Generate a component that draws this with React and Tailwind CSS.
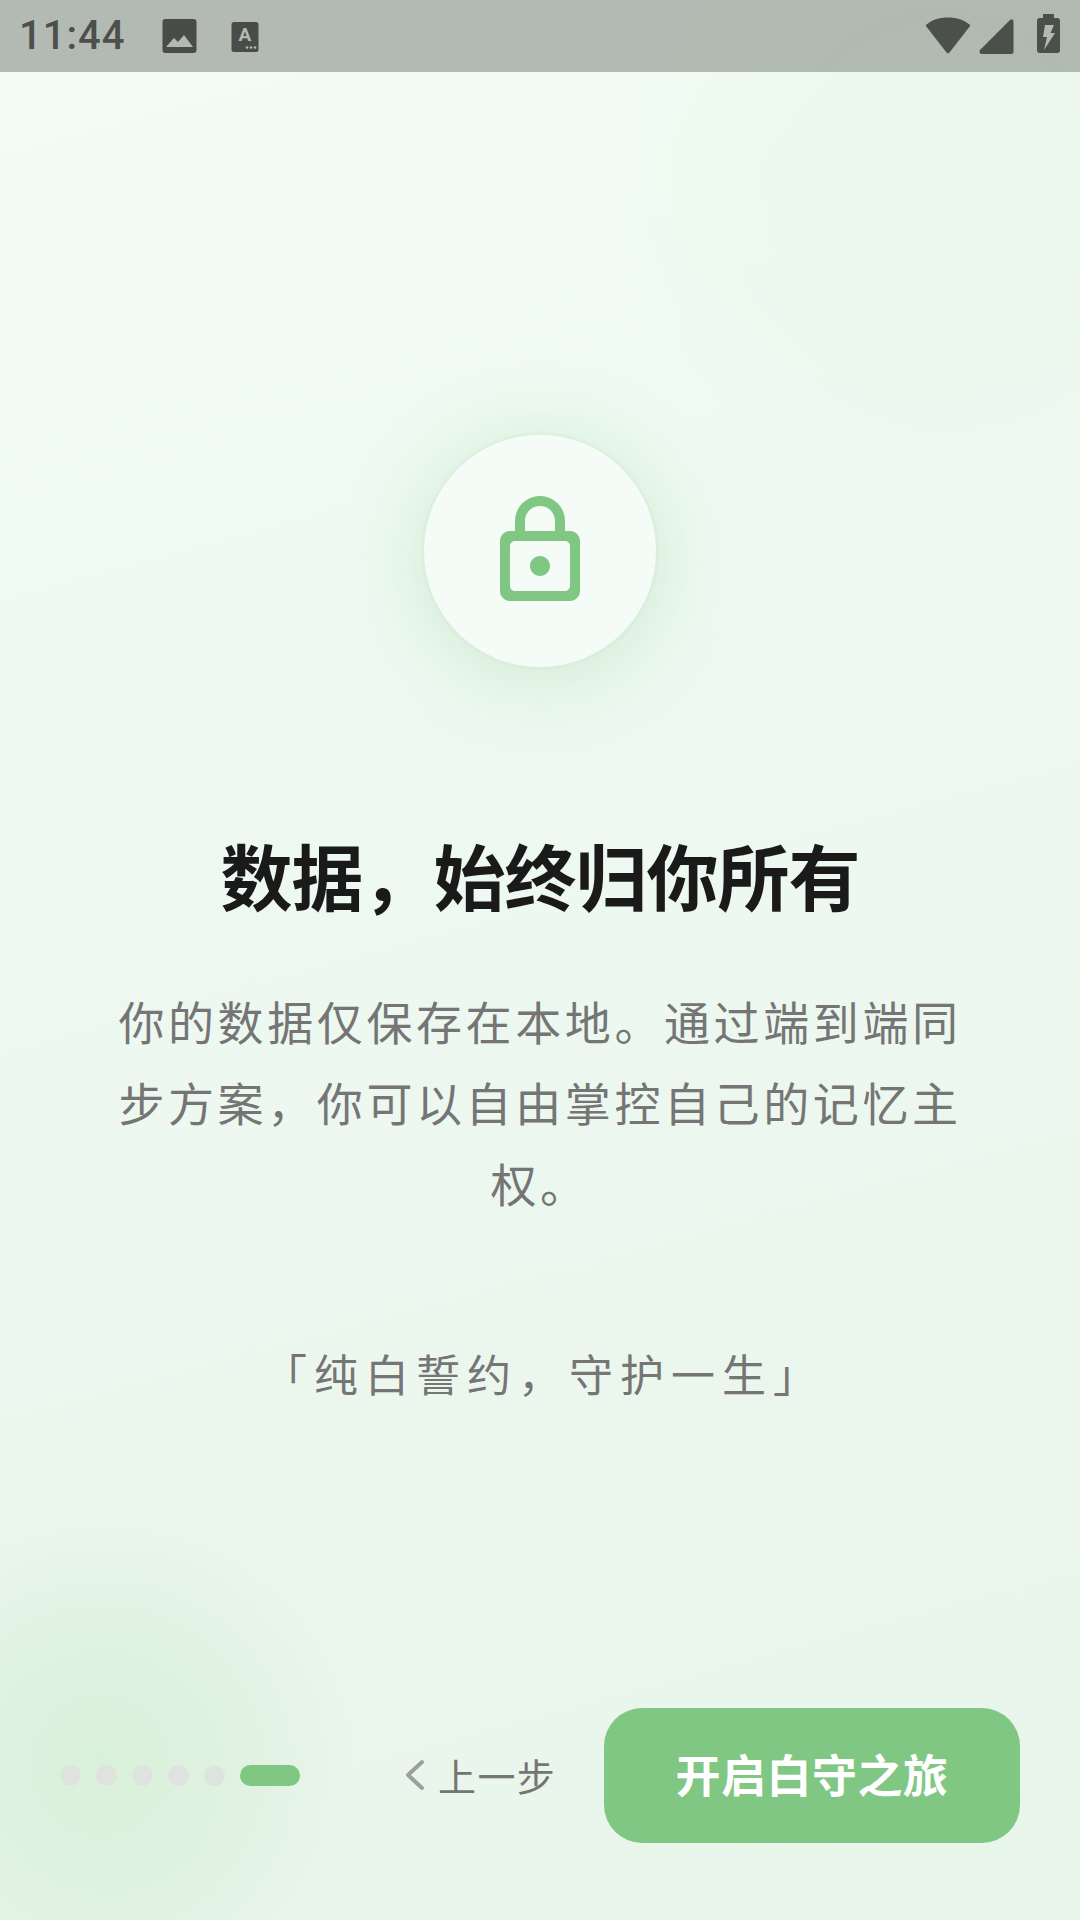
const cjk = "font-['Roboto','Noto_Sans_CJK_SC',sans-serif]";

function StatusBar() {
  return (
    <div className="flex h-[72px] shrink-0 items-center justify-between bg-[#b3bab3] pl-[19px] pr-[20px] text-[#4d4f4c]">
      <div className="flex items-center">
        <span className="w-[107px] font-['Roboto',sans-serif] text-[40px] font-medium leading-none tracking-[1px]">11:44</span>
        <svg className="ml-[36px]" width="36" height="36" viewBox="0 0 36 36">
          <rect x="0.5" y="1" width="34" height="34" rx="3" fill="#4a4c49" />
          <path d="M4 29l8-9 4 4 6-7 9 12z" fill="#b3bab3" />
        </svg>
        <svg className="ml-[33px]" width="28" height="32" viewBox="0 0 28 32">
          <rect x="0.5" y="2" width="27" height="30" rx="2.5" fill="#4a4c49" />
          <text x="14" y="21" textAnchor="middle" fontFamily="Roboto" fontWeight="700" fontSize="19" fill="#b3bab3">A</text>
          <circle cx="16" cy="27.5" r="1.3" fill="#b3bab3" />
          <circle cx="20" cy="27.5" r="1.3" fill="#b3bab3" />
          <circle cx="24" cy="27.5" r="1.3" fill="#b3bab3" />
        </svg>
      </div>
      <div className="flex items-center">
        <svg width="46" height="37" viewBox="0 0 46 37" className="mt-[-1px]">
          <path d="M1.500 7.500C7 3 14 0.500 23 0.500S39 3 44.500 7.500c.7.600.7 1.400.2 2L24.500 35.500c-.8 1-2.200 1-3 0L1.300 9.500c-.5-.6-.5-1.400.2-2z" fill="#4a4c49" />
        </svg>
        <svg className="ml-[8px] mt-[1px]" width="35" height="35" viewBox="0 0 35 35">
          <path d="M1 31L31 1c1.500-1.400 3.500-.6 3.500 1.400V33c0 1-.8 2-2 2H2.500C.5 35 0 32.500 1 31z" fill="#4a4c49" />
        </svg>
        <svg className="ml-[23px] mt-[-5px]" width="23" height="39" viewBox="0 0 23 39">
          <path d="M6 0h11v4h3.500c1.400 0 2.500 1 2.500 2.500V36.500c0 1.400-1 2.500-2.500 2.500h-18C1 39 0 38 0 36.500V6.500C0 5 1 4 2.500 4H6z" fill="#4a4c49" />
          <path d="M8 11h9l-3.500 8H18L7 36l3-13H6z" fill="#b3bab3" />
        </svg>
      </div>
    </div>
  );
}

function LockBadge() {
  return (
    <div className="flex h-[232px] w-[232px] items-center justify-center rounded-full bg-[#f5fcf7] shadow-[0_0_0_3px_rgba(129,199,132,0.05),0_8px_80px_rgba(129,199,132,0.3)]">
      <svg width="120" height="120" viewBox="0 0 24 24" fill="#81c784" fillRule="evenodd">
        <path d="M18 8h-1V6c0-2.760-2.240-5-5-5S7 3.240 7 6v2H6c-1.100 0-2 .9-2 2v10c0 1.100.9 2 2 2h12c1.100 0 2-.9 2-2V10c0-1.100-.9-2-2-2zM9 6c0-1.660 1.340-3 3-3s3 1.340 3 3v2H9V6zm8 14H7c-.55 0-1-.45-1-1v-8c0-.55.45-1 1-1h10c.55 0 1 .45 1 1v8c0 .55-.45 1-1 1zm-5-3c1.100 0 2-.9 2-2s-.9-2-2-2-2 .9-2 2 .9 2 2 2z" />
      </svg>
    </div>
  );
}

function Dots() {
  return (
    <div className="flex items-center gap-[15px]">
      {[0, 1, 2, 3, 4].map((i) => (
        <div key={i} className="h-[21px] w-[21px] rounded-full bg-[#dfe3e0]" />
      ))}
      <div className="h-[21px] w-[60px] rounded-full bg-[#81c784]" />
    </div>
  );
}

export default function App() {
  return (
    <div className={`relative flex h-[1920px] w-[1080px] flex-col overflow-hidden bg-[linear-gradient(165deg,#f2fcf4_0%,#edf8f0_50%,#e8f5e9_100%)] ${cjk}`}>
      <div className="absolute right-[-180px] top-[-150px] h-[640px] w-[640px] rounded-full bg-[radial-gradient(circle,rgba(129,199,132,0.05)_0%,rgba(129,199,132,0.025)_50%,rgba(129,199,132,0)_72%)]" />
      <div className="absolute bottom-[-90px] left-[-150px] h-[500px] w-[500px] rounded-full bg-[radial-gradient(circle,rgba(139,214,132,0.18)_0%,rgba(129,199,132,0.08)_45%,rgba(129,199,132,0)_72%)]" />
      <StatusBar />
      <div className="relative flex flex-1 flex-col items-center">
        <div className="mt-[363px]"><LockBadge /></div>
        <h1 className="mt-[160px] text-[72px] font-bold leading-[108px] tracking-[-1px] text-[#1a1a1a]">数据，始终归你所有</h1>
        <p className="mt-[49px] w-[860px] text-center text-[46px] font-normal leading-[81px] tracking-[3.6px] text-[#757575]">
          你的数据仅保存在本地。通过端到端同步方案，你可以自由掌控自己的记忆主权。
        </p>
        <p className="ml-[7px] mt-[118px] text-[44px] leading-[64px] tracking-[7px] text-[#757575]">「纯白誓约，守护一生」</p>
      </div>
      <div className="relative flex items-center pb-[77px] pl-[60px] pr-[60px]">
        <Dots />
        <div className="ml-[103px] flex w-[151px] shrink-0 items-center text-[#757575]">
          <svg width="22" height="32" viewBox="0 0 22 32" fill="none" stroke="#9e9e9e" strokeWidth="4" strokeLinecap="round" strokeLinejoin="round" className="mt-[-1px] shrink-0">
            <path d="M19 3L5 16l14 13" />
          </svg>
          <span className="ml-[13px] mt-[5px] whitespace-nowrap text-[38px] leading-none tracking-[1.4px]">上一步</span>
        </div>
        <div className="ml-[50px] flex h-[135px] w-[416px] shrink-0 items-center justify-center rounded-[38px] bg-[#81c784] pt-[5px] text-[45px] font-bold tracking-[0.5px] text-white">
          开启白守之旅
        </div>
      </div>
    </div>
  );
}
